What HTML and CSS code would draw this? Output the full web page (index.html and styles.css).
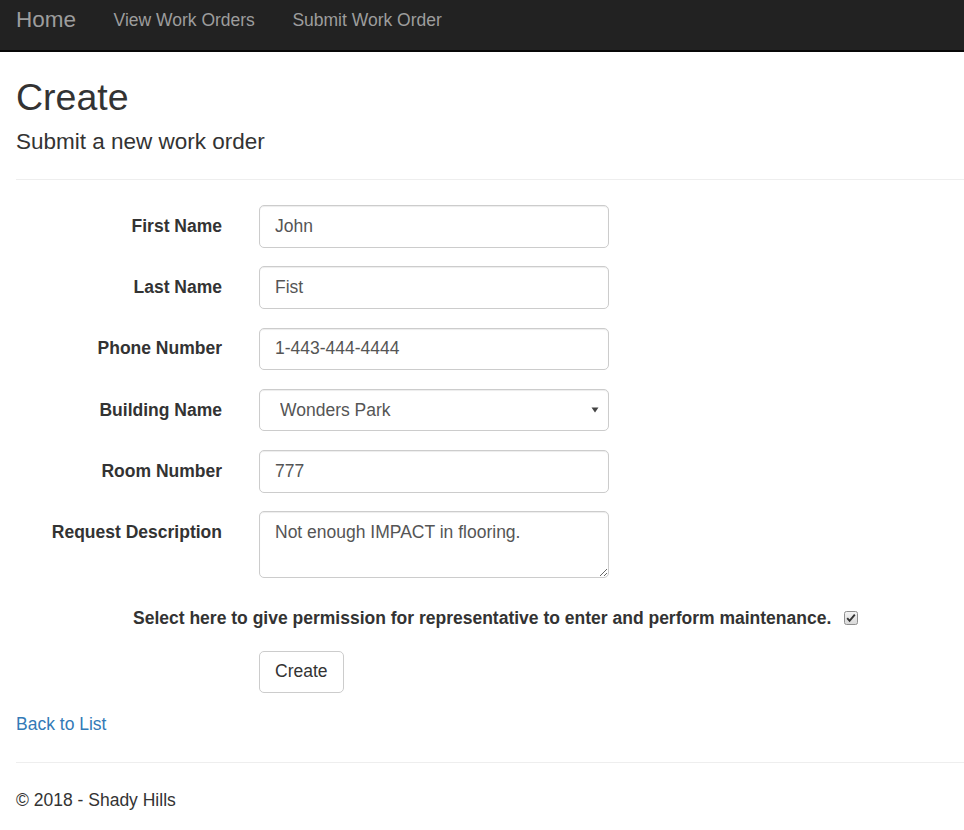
FILE: index.html
```html
<!DOCTYPE html>
<html lang="en">
<head>
<meta charset="utf-8">
<title>Create - Shady Hills</title>
<link rel="stylesheet" href="styles.css">
</head>
<body>
<nav class="navbar">
  <a class="brand" href="#">Home</a>
  <a class="nav-link" href="#">View Work Orders</a>
  <a class="nav-link" href="#">Submit Work Order</a>
</nav>
<main class="page">
  <h2 class="title">Create</h2>
  <h4 class="subtitle">Submit a new work order</h4>
  <hr class="rule rule-top">
  <form class="form">
    <div class="form-row">
      <label class="control-label">First Name</label>
      <div class="field"><input class="form-control" type="text" value="John"></div>
    </div>
    <div class="form-row">
      <label class="control-label">Last Name</label>
      <div class="field"><input class="form-control" type="text" value="Fist"></div>
    </div>
    <div class="form-row">
      <label class="control-label">Phone Number</label>
      <div class="field"><input class="form-control" type="text" value="1-443-444-4444"></div>
    </div>
    <div class="form-row">
      <label class="control-label">Building Name</label>
      <div class="field select-wrap">
        <select class="form-control select">
          <option>Wonders Park</option>
        </select>
        <svg class="select-arrow" width="8" height="6" viewBox="0 0 8 6"><path d="M0.5 0.5 L7.5 0.5 L4 5.5 Z" fill="#444"/></svg>
      </div>
    </div>
    <div class="form-row">
      <label class="control-label">Room Number</label>
      <div class="field"><input class="form-control" type="text" value="777"></div>
    </div>
    <div class="form-row">
      <label class="control-label">Request Description</label>
      <div class="field"><textarea class="form-control textarea" rows="2">Not enough IMPACT in flooring.</textarea></div>
    </div>
    <div class="form-row check-row">
      <label class="check-label">Select here to give permission for representative to enter and perform maintenance.</label>
      <span class="checkbox">
        <svg width="14" height="14" viewBox="0 0 14 14">
          <defs>
            <linearGradient id="cbg" x1="0" y1="0" x2="0" y2="1">
              <stop offset="0" stop-color="#f4f4f4"/>
              <stop offset="1" stop-color="#d8d8d8"/>
            </linearGradient>
          </defs>
          <rect x="0.5" y="0.5" width="13" height="13" rx="2" fill="url(#cbg)" stroke="#8f8f8f"/>
          <path d="M3.2 7.2 L5.6 9.8 L10.8 3.6" fill="none" stroke="#333" stroke-width="1.9"/>
        </svg>
      </span>
    </div>
    <div class="form-row button-row">
      <button class="btn" type="button">Create</button>
    </div>
  </form>
  <div class="back"><a href="#" class="link">Back to List</a></div>
  <hr class="rule rule-bottom">
  <footer class="footer">© 2018 - Shady Hills</footer>
</main>
</body>
</html>
```

FILE: styles.css
```css
* { box-sizing: border-box; }

html, body {
  margin: 0;
  padding: 0;
  background: #fff;
}

body {
  font-family: "Liberation Sans", Arial, Helvetica, sans-serif;
  font-size: 17.5px;
  line-height: 25px;
  color: #333;
}

.navbar {
  height: 52px;
  background: #222;
  border-bottom: 2px solid #080808;
  display: flex;
  align-items: flex-start;
  padding-left: 16px;
}

.brand {
  font-size: 22.5px;
  line-height: 25px;
  padding-top: 7px;
  color: #9d9d9d;
  text-decoration: none;
  margin-right: 37.5px;
}

.nav-link {
  font-size: 17.5px;
  line-height: 25px;
  padding-top: 7.5px;
  color: #9d9d9d;
  text-decoration: none;
  margin-right: 37.5px;
}

.page {
  padding-left: 16px;
}

.title {
  font-size: 37.5px;
  font-weight: 500;
  line-height: 41px;
  margin: 25px 0 0;
}

.subtitle {
  font-size: 22.5px;
  font-weight: 500;
  line-height: 25px;
  margin: 11px 0 0;
}

.rule {
  border: 0;
  border-top: 1px solid #eee;
  margin: 0;
  height: 0;
}

.rule-top {
  margin-top: 25px;
}

.form {
  margin-top: 25px;
  display: flex;
  flex-direction: column;
  gap: 18.75px;
}

.form-row {
  display: flex;
  align-items: flex-start;
}

.control-label {
  width: 206px;
  text-align: right;
  font-weight: bold;
  padding-top: 8.75px;
  margin-right: 37px;
}

.field {
  width: 350px;
}

.form-control {
  display: block;
  width: 350px;
  height: 42.5px;
  padding: 7.5px 15px;
  font-family: "Liberation Sans", Arial, Helvetica, sans-serif;
  font-size: 17.5px;
  line-height: 25px;
  color: #555;
  background: #fff;
  border: 1px solid #ccc;
  border-radius: 5px;
  box-shadow: inset 0 1px 1px rgba(0, 0, 0, 0.075);
  margin: 0;
}

.select-wrap {
  position: relative;
}

.select {
  appearance: none;
  -webkit-appearance: none;
  padding-left: 20px;
}

.select-arrow {
  position: absolute;
  right: 10px;
  top: 18px;
}

.textarea {
  height: 67px;
  resize: vertical;
  overflow: auto;
}

.check-row {
  align-items: flex-start;
}

.check-label {
  font-weight: bold;
  padding-top: 9px;
  padding-left: 117px;
  line-height: 25px;
}

.checkbox {
  display: block;
  margin-left: 13px;
  padding-top: 14px;
  height: 35px;
}

.checkbox svg {
  display: block;
}

.button-row {
  padding-left: 243px;
}

.btn {
  font-family: "Liberation Sans", Arial, Helvetica, sans-serif;
  font-size: 17.5px;
  line-height: 25px;
  color: #333;
  background: #fff;
  border: 1px solid #ccc;
  border-radius: 5px;
  padding: 7.5px 15px;
  height: 42px;
  cursor: pointer;
}

.back {
  margin-top: 19px;
}

.link {
  color: #337ab7;
  text-decoration: none;
}

.rule-bottom {
  margin-top: 25.5px;
}

.footer {
  margin-top: 25px;
  padding-bottom: 20px;
}
```
